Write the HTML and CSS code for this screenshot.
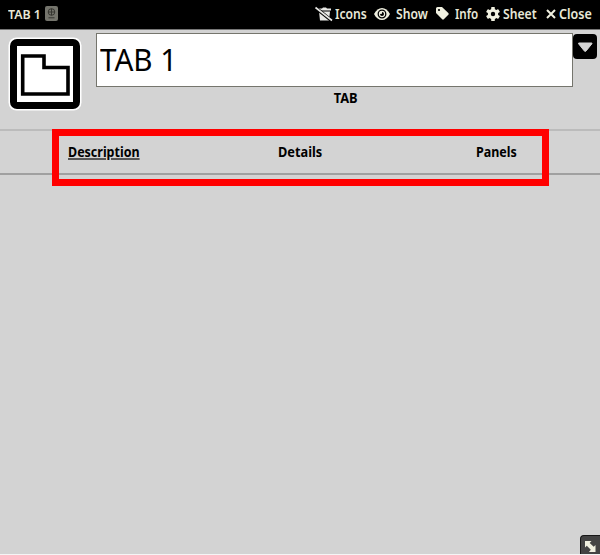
FILE: index.html
```
<!DOCTYPE html>
<html lang="en">
<head>
<meta charset="utf-8">
<title>TAB 1</title>
<link rel="stylesheet" href="styles.css">
</head>
<body>
<div class="window">
  <header class="titlebar">
    <h1 class="title">TAB 1</h1>
    <svg class="passport" width="13" height="15" viewBox="0 0 13 15"><rect width="13" height="15" rx="2" fill="#74746c"/><g fill="none" stroke="#34342f"><circle cx="6.5" cy="6" r="3.3"/><path d="M3.2 6h6.6M6.5 2.7v6.6M3.5 11.8h6"/></g></svg>
    <nav class="controls">
      <a class="control icons"><svg width="18" height="16" viewBox="0 0 18 16"><path d="M3 2.5h4l1-1h3l1 1h4v2H3zM4 5.5h11l-1 9H5z" fill="#e8e8e5"/><path d="M1 2l15.5 12.5" stroke="#000" stroke-width="3.5"/><path d="M.5 1.5l16.5 13" stroke="#e8e8e5" stroke-width="1.6"/></svg><span>Icons</span></a>
      <a class="control show"><svg width="16" height="14" viewBox="0 0 16 14"><path d="M0 7C4-1 12-1 16 7C12 15 4 15 0 7z" fill="#f0f0e0"/><circle cx="8" cy="7" r="3.8" fill="none" stroke="#000" stroke-width="1.3"/><path d="M8 5a2 2 0 1 1-2 2l2-.2z" fill="#000"/></svg><span>Show</span></a>
      <a class="control info"><svg width="13" height="13" viewBox="0 0 13 13"><path d="M0 1.5Q0 0 1.5 0H6l6.3 6.1q.8.8 0 1.6l-4.5 4.6q-.8.8-1.6 0L0 6z" fill="#f0f0e0"/><circle cx="3" cy="3" r="1.1"/></svg><span>Info</span></a>
      <a class="control sheet"><svg width="14" height="14" viewBox="-7 -7 14 14"><g fill="#f0f0e0"><circle r="5.2"/><rect x="-1.8" y="-7" width="3.6" height="14" rx=".6"/><rect x="-1.8" y="-7" width="3.6" height="14" rx=".6" transform="rotate(60)"/><rect x="-1.8" y="-7" width="3.6" height="14" rx=".6" transform="rotate(120)"/></g><circle r="2.2"/></svg><span>Sheet</span></a>
      <a class="control close"><svg width="10" height="10" viewBox="0 0 10 10"><path d="M1 1l8 8M9 1l-8 8" stroke="#f0f0e0" stroke-width="2"/></svg><span>Close</span></a>
    </nav>
  </header>
  <section class="heading">
    <svg class="portrait" width="74" height="74" viewBox="0 0 74 74"><rect x=".5" y=".5" width="73" height="73" rx="8" fill="#fff"/><rect x="2" y="2" width="70" height="70" rx="7"/><path d="M9 9h56v56H9z" fill="#fff"/><path d="M14.7 19h21.3v11.5h24V57H14.7z" fill="#fff" stroke="#000" stroke-width="3.6"/></svg>
    <div class="identity">
      <div class="name"><span>TAB 1</span></div>
      <div class="type"><span>TAB</span></div>
    </div>
    <button class="toggle" aria-label="Menu"><svg width="24" height="25" viewBox="0 0 24 25"><path d="M6 9h12.5q1 0 .3.9l-5.7 7q-.9 1-1.8 0l-5.6-7Q5 9 6 9z" fill="#d4d4d4" stroke="#d4d4d4"/></svg></button>
  </section>
  <nav class="tabs">
    <a class="tab description"><span>Description</span></a>
    <a class="tab details"><span>Details</span></a>
    <a class="tab panels"><span>Panels</span></a>
    <div class="highlight"></div>
  </nav>
  <div class="resize"><svg width="20" height="19" viewBox="0 0 20 19"><path d="M4 5h6.5L8.7 7l4 3.8L14.5 9v7H8l1.8-2.3-4-4L4 11.5z" fill="#f0f0e0"/></svg></div>
</div>
</body>
</html>
```
FILE: styles.css
```
* { box-sizing: border-box; }
body { margin: 0; font-family: "Noto Sans", "Open Sans", sans-serif; }
.window { position: relative; width: 600px; height: 555px; background: #d3d3d3; border-bottom: 1px solid #f5f5f5; overflow: hidden; }
.titlebar { display: flex; align-items: center; height: 30px; padding: 0 8px 2px; background: #000; color: #e8e8d8; border-bottom: 1px solid #777; }
.title { margin: 0; width: 37px; font-size: 13px; font-weight: 600; line-height: 20px; white-space: nowrap; transform: scaleX(.95); transform-origin: left; }
.passport { flex: none; margin-top: -1px; }
.controls { display: flex; align-items: center; margin-left: auto; }
.control { display: flex; align-items: center; font-size: 13.5px; font-weight: 600; line-height: 20px; }
.control svg { flex: none; }
.control span { white-space: nowrap; transform: scaleX(.9); transform-origin: left; }
.icons { width: 59px; gap: 2px; }
.show { width: 62px; gap: 6px; }
.info { width: 50px; gap: 6px; }
.info span { transform: scaleX(.86); }
.sheet { width: 60px; gap: 3px; }
.close { width: 46px; gap: 3px; }
.close span { transform: scaleX(.93); }
.heading { display: flex; align-items: flex-start; height: 99px; padding: 3px 3px 0 8px; }
.portrait { flex: none; margin-top: 4px; }
.identity { width: 477px; margin-left: 14px; }
.name { height: 54px; padding: 0 3px; background: #fff; border: 1px solid #75756d; color: #000; font-size: 31px; line-height: 50px; }
.name span { display: inline-block; transform: scaleX(.955); transform-origin: left; }
.type { display: flex; justify-content: center; padding-left: 23px; font-size: 13.5px; line-height: 22px; font-weight: 700; }
.type span { transform: scaleX(.95); }
.toggle { flex: none; width: 24px; height: 25px; margin-top: 1px; padding: 0; border: 0; border-radius: 4px; background: #000; }
.toggle svg { display: block; }
.tabs { position: relative; display: flex; height: 46px; padding-top: 11px; border-top: 2px solid #bbb; border-bottom: 2px solid #a0a0a0; }
.tab { font-size: 13.5px; line-height: 20px; font-weight: 700; }
.tab span { display: inline-block; transform: scaleX(.925); transform-origin: left; }
.description { width: 210px; margin-left: 68px; }
.description span { text-decoration: underline; text-decoration-color: #555; text-decoration-thickness: 2px; text-underline-offset: 1px; }
.details { width: 198px; }
.details span { transform: scaleX(.945); }
.highlight { position: absolute; left: 52px; top: -2px; width: 497px; height: 57px; border: 7px solid #f00; }
.resize { position: absolute; right: 0; bottom: 0; width: 20px; height: 19px; background: #444; border: solid #181818; border-width: 1px 0 0 1px; border-radius: 4px 0 0; }
.resize svg { display: block; }
```
